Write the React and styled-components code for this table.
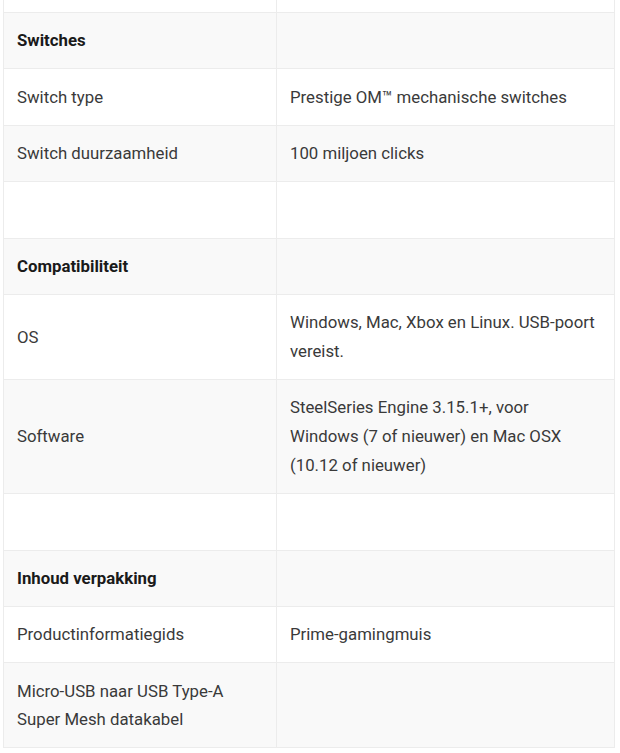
import React from 'react'
import styled, { createGlobalStyle } from 'styled-components'

const GlobalStyle = createGlobalStyle`
  body {
    margin: 0;
    background: #fff;
    font-family: Roboto, "Liberation Sans", Arial, sans-serif;
  }
`

const Wrap = styled.div`
  padding: 0 6px 0 3px;
`

const Table = styled.table`
  width: 612px;
  border-collapse: collapse;
  table-layout: fixed;
  font-size: 16.8px;
  line-height: 28.8px;
  color: #3a3a3a;
`

const Row = styled.tr`
  background: ${p => (p.$shade ? '#f9f9f9' : '#fff')};
`

const Cell = styled.td`
  border: 1px solid #ececec;
  padding: 13.3px 13px;
  vertical-align: middle;
  font-weight: ${p => (p.$head ? 700 : 400)};
  color: ${p => (p.$head ? '#1a1a1a' : '#3a3a3a')};
  &:first-child {
    width: 246px;
  }
`

const Partial = styled.td`
  height: 12px;
  padding: 0;
  border: 1px solid #ececec;
  border-top: none;
  &:first-child {
    width: 272px;
  }
`

const rows = [
  { k: 'Switches', v: '', head: true },
  { k: 'Switch type', v: 'Prestige OM™ mechanische switches' },
  { k: 'Switch duurzaamheid', v: '100 miljoen clicks' },
  { k: '', v: '' },
  { k: 'Compatibiliteit', v: '', head: true },
  { k: 'OS', v: 'Windows, Mac, Xbox en Linux. USB-poort vereist.' },
  { k: 'Software', v: 'SteelSeries Engine 3.15.1+, voor Windows (7 of nieuwer) en Mac OSX (10.12 of nieuwer)' },
  { k: '', v: '' },
  { k: 'Inhoud verpakking', v: '', head: true },
  { k: 'Productinformatiegids', v: 'Prime-gamingmuis' },
  { k: 'Micro-USB naar USB Type-A Super Mesh datakabel', v: '' },
]

export default function App() {
  return (
    <Wrap>
      <GlobalStyle />
      <Table>
        <tbody>
          <Row>
            <Partial />
            <Partial />
          </Row>
          {rows.map((r, i) => (
            <Row key={i} $shade={i % 2 === 0}>
              <Cell $head={r.head}>{r.k || '\u00a0'}</Cell>
              <Cell>{r.v || '\u00a0'}</Cell>
            </Row>
          ))}
        </tbody>
      </Table>
    </Wrap>
  )
}
